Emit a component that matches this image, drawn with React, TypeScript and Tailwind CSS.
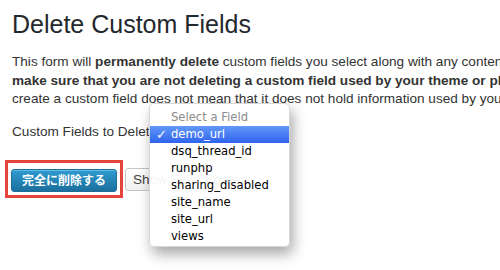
const fields = [
  "demo_url",
  "dsq_thread_id",
  "runphp",
  "sharing_disabled",
  "site_name",
  "site_url",
  "views",
];

function FieldMenu() {
  return (
    <div
      className="absolute left-[149px] top-[103px] w-[141px] h-[144px] rounded-[5px] bg-white/95 border border-[#d8d8d8] shadow-[3px_7px_14px_rgba(0,0,0,0.35)] pt-[5px] pb-[3px] text-[11.6px] leading-[17px]"
      style={{ fontFamily: '"DejaVu Sans", "Noto Sans", sans-serif' }}
    >
      <div className="h-[17px] pl-[21px] text-[#8c8c8c]">Select a Field</div>
      {fields.map((f, i) => (
        <div
          key={f}
          className={
            i === 0
              ? "relative h-[17px] pl-[21px] text-white bg-gradient-to-b from-[#6497f7] to-[#2f62ee]"
              : "h-[17px] pl-[21px] text-black"
          }
        >
          {i === 0 && <span className="absolute left-[6px] top-0 font-bold text-[13px]">✓</span>}
          {f}
        </div>
      ))}
    </div>
  );
}

export default function App() {
  return (
    <div
      className="relative w-[500px] h-[270px] overflow-hidden bg-white px-3 text-[#333]"
      style={{ fontFamily: '"Liberation Sans", Arial, sans-serif' }}
    >
      <h1 className="pt-[9px] text-[25px] leading-[30px] font-normal text-[#23282d] whitespace-nowrap">
        Delete Custom Fields
      </h1>

      <div className="mt-[14px] text-[13.6px] leading-[18.6px] whitespace-nowrap">
        <div>
          This form will <b>permanently delete</b> custom fields you select along with any content associated with them. Please
        </div>
        <div className="font-bold">
          make sure that you are not deleting a custom field used by your theme or plugins. Just because you did not
        </div>
        <div>
          create a custom field does not mean that it does not hold information used by your theme or plugins.
        </div>
      </div>

      <div className="mt-[14px] text-[13.6px] leading-[18.6px] whitespace-nowrap">
        Custom Fields to Delete
      </div>

      <div className="mt-[19px] flex items-start gap-[2px] whitespace-nowrap">
        <div className="-ml-[7px] border-[3px] border-[#e5443b] pt-[5px] pb-[3px] px-[3px]">
          <button
            className="h-[23px] w-[106px] rounded-[3px] border border-[#1d6e99] bg-gradient-to-b from-[#2f9bd0] to-[#1b6f9d] text-white text-[12px] font-bold shadow-[inset_0_1px_0_rgba(140,210,240,0.6)]"
            style={{ fontFamily: '"Noto Sans CJK JP", sans-serif' }}
          >
            完全に削除する
          </button>
        </div>
        <button className="mt-[8px] h-[23px] px-[7px] rounded-[3px] border border-[#c4c4c4] bg-gradient-to-b from-white to-[#f0f0f0] text-[13.6px] text-[#444]">
          Show Field Content
        </button>
      </div>

      <FieldMenu />
    </div>
  );
}
